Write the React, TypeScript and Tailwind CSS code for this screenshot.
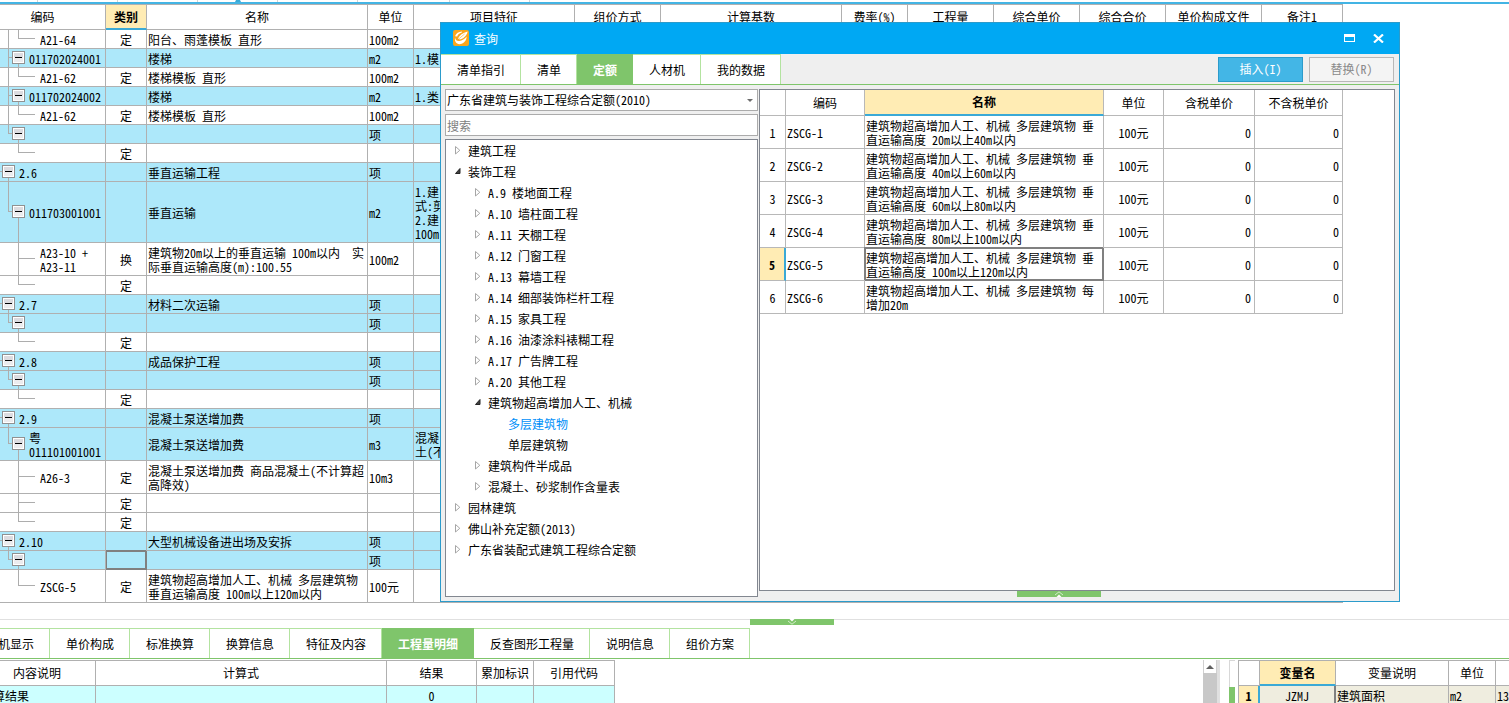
import React from 'react'
import clsx from 'clsx'

type Row = {
  h: 19 | 33 | 61
  level: 0 | 1 | 2
  code?: string
  kind?: string
  name?: string
  unit?: string
  feature?: string
  /** outer branch line: passes through the row or stops at its node */
  outer?: 'through' | 'end'
  /** more siblings follow below on the inner branch */
  more?: boolean
  selected?: boolean
}

const rows: Row[] = [
  { h: 19, level: 2, code: 'A21-64', kind: '定', name: '阳台、雨蓬模板 直形', unit: '100m2', outer: 'through' },
  { h: 19, level: 1, code: '011702024001', name: '楼梯', unit: 'm2', feature: '1.模', outer: 'through' },
  { h: 19, level: 2, code: 'A21-62', kind: '定', name: '楼梯模板 直形', unit: '100m2', outer: 'through' },
  { h: 19, level: 1, code: '011702024002', name: '楼梯', unit: 'm2', feature: '1.类', outer: 'through' },
  { h: 19, level: 2, code: 'A21-62', kind: '定', name: '楼梯模板 直形', unit: '100m2', outer: 'through' },
  { h: 19, level: 1, unit: '项', outer: 'end' },
  { h: 19, level: 2, kind: '定' },
  { h: 19, level: 0, code: '2.6', name: '垂直运输工程', unit: '项' },
  { h: 61, level: 1, code: '011703001001', name: '垂直运输', unit: 'm2', feature: '1.建\n式:剪\n2.建\n100m', outer: 'end' },
  { h: 33, level: 2, code: 'A23-10 +\nA23-11', kind: '换', name: '建筑物20m以上的垂直运输 100m以内  实\n际垂直运输高度(m):100.55', unit: '100m2', more: true },
  { h: 19, level: 2, kind: '定' },
  { h: 19, level: 0, code: '2.7', name: '材料二次运输', unit: '项' },
  { h: 19, level: 1, unit: '项', outer: 'end' },
  { h: 19, level: 2, kind: '定' },
  { h: 19, level: 0, code: '2.8', name: '成品保护工程', unit: '项' },
  { h: 19, level: 1, unit: '项', outer: 'end' },
  { h: 19, level: 2, kind: '定' },
  { h: 19, level: 0, code: '2.9', name: '混凝土泵送增加费', unit: '项' },
  { h: 33, level: 1, code: '粤\n011101001001', name: '混凝土泵送增加费', unit: 'm3', feature: '混凝\n土(不', outer: 'end' },
  { h: 33, level: 2, code: 'A26-3', kind: '定', name: '混凝土泵送增加费 商品混凝土(不计算超\n高降效)', unit: '10m3', more: true },
  { h: 19, level: 2, kind: '定', more: true },
  { h: 19, level: 2, kind: '定' },
  { h: 19, level: 0, code: '2.10', name: '大型机械设备进出场及安拆', unit: '项' },
  { h: 19, level: 1, unit: '项', outer: 'end', selected: true },
  { h: 33, level: 2, code: 'ZSCG-5', kind: '定', name: '建筑物超高增加人工、机械 多层建筑物\n垂直运输高度 100m以上120m以内', unit: '100元' },
]

const rowHeight = { 19: 'h-[19px]', 33: 'h-[33px]', 61: 'h-[61px]' }
const codeIndent = ['pl-[19px]', 'pl-[29px]', 'pl-10']

// the focused cell gets a 2px frame that also covers its neighbours' grid lines
const focusFrame =
  'border-r-2 border-b-2 border-[#808080] shadow-[inset_1px_1px_#808080,-1px_-1px_#808080]'

const mainHeads = ['编码', '类别', '名称', '单位', '项目特征', '组价方式', '计算基数', '费率(%)', '工程量', '综合单价', '综合合价', '单价构成文件', '备注1']
const emptyCols = mainHeads.slice(5)

const BranchLines: React.FC<{ row: Row }> = ({ row }) => {
  const { h, level, outer, more } = row
  const mid = (h - 1) / 2 - 1
  const boxX = level === 0 ? 2 : 12
  return (
    <svg className="absolute top-0 left-0" width="36" height={h} shapeRendering="crispEdges" aria-hidden="true">
      <g fill="#adadad">
        {level === 0 && <rect x="0" y={mid} width="2" height="1" />}
        {level === 0 && <rect x="8" y={mid} width="1" height={h - mid} />}
        {outer && <rect x="8" y="0" width="1" height={outer === 'end' ? mid + 1 : h} />}
        {level === 1 && <rect x="8" y={mid} width="4" height="1" />}
        {level === 1 && <rect x="18" y={mid} width="1" height={h - mid} />}
        {level === 2 && <rect x="18" y="0" width="1" height={more ? h : mid + 1} />}
        {level === 2 && <rect x="18" y={mid} width="17" height="1" />}
      </g>
      {level < 2 && (
        <>
          <rect x={boxX} y={mid - 6} width="13" height="13" fill="#919191" />
          <rect x={boxX + 1} y={mid - 5} width="11" height="11" fill="#fff" />
          <rect x={boxX + 2} y={mid - 4} width="9" height="4" fill="#dcdce0" />
          <rect x={boxX + 2} y={mid} width="9" height="5" fill="#ececee" />
          <rect x={boxX + 3} y={mid} width="7" height="1" fill="#000" />
        </>
      )}
    </svg>
  )
}

const MainGrid = () => (
  <table className="w-[1343px] table-fixed border-separate border-spacing-0 border-t border-[#b0b0b0]">
    <colgroup>
      <col className="w-[106px]" />
      <col className="w-[41px]" />
      <col className="w-[221px]" />
      <col className="w-[46px]" />
      <col className="w-[161px]" />
      <col className="w-[86px]" />
      <col className="w-[181px]" />
      <col className="w-[66px]" />
      <col className="w-[86px]" />
      <col className="w-[86px]" />
      <col className="w-[86px]" />
      <col className="w-[96px]" />
      <col className="w-[81px]" />
    </colgroup>
    <thead>
      <tr className="h-[25px]">
        {mainHeads.map((head) => (
          <th
            key={head}
            className={clsx(
              'border-r border-[#b0b0b0] p-0',
              head === '编码' && 'pr-5',
              head === '类别' ? 'border-b-2 border-b-[#3ba9d6] bg-[#ffecb4] font-bold' : 'border-b font-normal',
            )}
          >
            {head}
          </th>
        ))}
      </tr>
    </thead>
    <tbody>
      {rows.map((row, i) => (
        <tr key={i} className={clsx(rowHeight[row.h], row.level < 2 ? 'bg-[#ade8fa]' : 'bg-white')}>
          <td className={clsx('relative border-r border-b border-[#b0b0b0] pt-0.5 pr-0 pb-0', codeIndent[row.level])}>
            <BranchLines row={row} />
            {row.code}
          </td>
          <td
            className={clsx(
              'p-0 pt-0.5 text-center',
              row.selected ? focusFrame : 'border-r border-b border-[#b0b0b0]',
            )}
          >
            {row.kind}
          </td>
          <td className="border-r border-b border-[#b0b0b0] pt-0.5 pr-0 pb-0 pl-px">{row.name}</td>
          <td className="border-r border-b border-[#b0b0b0] pt-0.5 pr-0 pb-0 pl-px">{row.unit}</td>
          <td className="border-r border-b border-[#b0b0b0] pt-0.5 pr-0 pb-0 pl-px">{row.feature}</td>
          {emptyCols.map((col) => (
            <td key={col} className="border-r border-b border-[#b0b0b0] p-0" />
          ))}
        </tr>
      ))}
    </tbody>
  </table>
)

type Node = { label: string; depth: 0 | 1 | 2; state: 'open' | 'closed' | 'leaf'; active?: boolean }

const tree: Node[] = [
  { label: '建筑工程', depth: 0, state: 'closed' },
  { label: '装饰工程', depth: 0, state: 'open' },
  { label: 'A.9 楼地面工程', depth: 1, state: 'closed' },
  { label: 'A.10 墙柱面工程', depth: 1, state: 'closed' },
  { label: 'A.11 天棚工程', depth: 1, state: 'closed' },
  { label: 'A.12 门窗工程', depth: 1, state: 'closed' },
  { label: 'A.13 幕墙工程', depth: 1, state: 'closed' },
  { label: 'A.14 细部装饰栏杆工程', depth: 1, state: 'closed' },
  { label: 'A.15 家具工程', depth: 1, state: 'closed' },
  { label: 'A.16 油漆涂料裱糊工程', depth: 1, state: 'closed' },
  { label: 'A.17 广告牌工程', depth: 1, state: 'closed' },
  { label: 'A.20 其他工程', depth: 1, state: 'closed' },
  { label: '建筑物超高增加人工、机械', depth: 1, state: 'open' },
  { label: '多层建筑物', depth: 2, state: 'leaf', active: true },
  { label: '单层建筑物', depth: 2, state: 'leaf' },
  { label: '建筑构件半成品', depth: 1, state: 'closed' },
  { label: '混凝土、砂浆制作含量表', depth: 1, state: 'closed' },
  { label: '园林建筑', depth: 0, state: 'closed' },
  { label: '佛山补充定额(2013)', depth: 0, state: 'closed' },
  { label: '广东省装配式建筑工程综合定额', depth: 0, state: 'closed' },
]

const nodeIndent = ['pl-[9px]', 'pl-[29px]', 'pl-[49px]']

const CategoryTree = () => (
  <ul className="flex-1 border border-[#828790] bg-white">
    {tree.map((node) => (
      <li key={node.label} className={clsx('flex h-[21px] items-center gap-1.5', nodeIndent[node.depth])}>
        <svg className="shrink-0" width="7" height="9" viewBox="0 0 7 9" aria-hidden="true">
          {node.state === 'closed' && <path d="M0.5 0.5V8L4.8 4.3Z" fill="#fff" stroke="#a6a6a6" />}
          {node.state === 'open' && <path d="M5 1.5V6.5H0.5Z" fill="#404040" stroke="#262626" />}
        </svg>
        <span className={node.active ? 'text-[#0090f8]' : undefined}>{node.label}</span>
      </li>
    ))}
  </ul>
)

const quotaRows = [
  ['ZSCG-1', '建筑物超高增加人工、机械 多层建筑物 垂\n直运输高度 20m以上40m以内'],
  ['ZSCG-2', '建筑物超高增加人工、机械 多层建筑物 垂\n直运输高度 40m以上60m以内'],
  ['ZSCG-3', '建筑物超高增加人工、机械 多层建筑物 垂\n直运输高度 60m以上80m以内'],
  ['ZSCG-4', '建筑物超高增加人工、机械 多层建筑物 垂\n直运输高度 80m以上100m以内'],
  ['ZSCG-5', '建筑物超高增加人工、机械 多层建筑物 垂\n直运输高度 100m以上120m以内'],
  ['ZSCG-6', '建筑物超高增加人工、机械 多层建筑物 每\n增加20m'],
]

const QuotaTable = () => (
  <table className="w-[583px] table-fixed border-separate border-spacing-0">
    <colgroup>
      <col className="w-[26px]" />
      <col className="w-[79px]" />
      <col className="w-[239px]" />
      <col className="w-[60px]" />
      <col className="w-[91px]" />
      <col className="w-[88px]" />
    </colgroup>
    <thead>
      <tr className="h-[26px]">
        {['', '编码', '名称', '单位', '含税单价', '不含税单价'].map((head) => (
          <th
            key={head}
            className={clsx(
              'border-r border-[#b8b8b8] p-0',
              head === '名称' ? 'border-b-2 border-b-[#3ba9d6] bg-[#ffecb4] font-bold' : 'border-b font-normal',
            )}
          >
            {head}
          </th>
        ))}
      </tr>
    </thead>
    <tbody>
      {quotaRows.map(([code, name], i) => {
        const current = code === 'ZSCG-5'
        return (
          <tr key={code} className="h-[33px]">
            <td
              className={clsx(
                'border-b border-[#b8b8b8] p-0 pt-0.5 text-center',
                current ? 'border-r-2 border-r-[#3ba9d6] bg-[#ffecb4] font-bold' : 'border-r',
              )}
            >
              {i + 1}
            </td>
            <td className="border-r border-b border-[#b8b8b8] pt-0.5 pr-0 pb-0 pl-px">{code}</td>
            <td className={clsx('p-0 pt-0.5 pl-px', current ? focusFrame : 'border-r border-b border-[#b8b8b8]')}>
              {name}
            </td>
            <td className="border-r border-b border-[#b8b8b8] p-0 pt-0.5 text-center">100元</td>
            <td className="border-r border-b border-[#b8b8b8] pt-0.5 pr-[3px] pb-0 pl-0 text-right">0</td>
            <td className="border-r border-b border-[#b8b8b8] pt-0.5 pr-[3px] pb-0 pl-0 text-right">0</td>
          </tr>
        )
      })}
    </tbody>
  </table>
)

const dialogTabs = ['清单指引', '清单', '定额', '人材机', '我的数据']

const QueryDialog = () => (
  <section
    aria-label="查询"
    className="absolute top-[22px] left-[440px] flex h-[580px] w-[960px] flex-col border border-[#2b9bcb] bg-[#efefef]"
  >
    <header className="flex h-[31px] items-center bg-[#00a8f3] pr-[15px] pb-px pl-3 text-white">
      <svg width="16" height="16" viewBox="0 0 16 16" aria-hidden="true">
        <rect width="16" height="16" rx="2" fill="#f9a61c" />
        <path d="M2 6.2C3.2 3.4 5.6 1.8 9 1.6L8.6 2.8C6.4 3.4 4.8 4.6 4.2 6.4Z" fill="#fff" />
        <path d="M5 8.4C6.6 5.4 9.6 2.6 14.6 1.4C14.2 4.6 11.4 8 6.8 9.6Z" fill="#fff" />
        <path d="M2 7.6C2.4 10.4 4 11.2 6.4 11C9 10.8 11.8 9 13.6 6.6C13.6 10.6 10.6 14.2 6.4 14.2C3.2 14.2 1.4 11.4 2 7.6Z" fill="#fff" />
        <path d="M5.4 9.2L11.6 4" stroke="#f9a61c" strokeWidth="0.6" />
      </svg>
      <h2 className="ml-[5px] flex-1 pt-px">查询</h2>
      <button type="button" aria-label="最大化" className="mr-[18px]">
        <svg width="11" height="8" viewBox="0 0 11 8" shapeRendering="crispEdges">
          <path d="M0 0H11V8H0ZM1 3V7H10V3Z" fill="#fff" fillRule="evenodd" />
        </svg>
      </button>
      <button type="button" aria-label="关闭">
        <svg width="11" height="9" viewBox="0 0 11 9">
          <path d="M1 0.5L10 8.5M10 0.5L1 8.5" stroke="#fff" strokeWidth="2.2" />
        </svg>
      </button>
    </header>

    <div className="flex h-[31px] items-stretch border-b border-[#7fc56b]">
      {dialogTabs.map((tab) => (
        <button
          key={tab}
          type="button"
          className={clsx(
            'border-t border-r pr-[15px] pl-4',
            tab === '定额' ? 'border-[#7fc56b] bg-[#7fc56b] font-bold text-white' : 'border-[#b3e3a0] bg-white',
          )}
        >
          {tab}
        </button>
      ))}
      <div className="flex flex-1 items-center justify-end gap-1.5 pr-[5px]">
        <button type="button" className="h-[25px] w-[85px] border border-[#2b9bcb] bg-[#43b6e6] text-white">
          插入(I)
        </button>
        <button type="button" disabled className="h-[25px] w-[85px] border border-[#b8b8b8] bg-[#f4f4f4] text-[#8a8a8a]">
          替换(R)
        </button>
      </div>
    </div>

    <div className="flex min-h-0 flex-1 gap-px p-1">
      <div className="flex w-[313px] flex-col gap-[3px]">
        <div className="relative flex">
          <select
            aria-label="定额库"
            className="h-[22px] w-full appearance-none border border-[#ababab] bg-white pl-px"
          >
            <option>广东省建筑与装饰工程综合定额(2010)</option>
          </select>
          <svg className="pointer-events-none absolute top-2.5 right-[5px]" width="6" height="3" viewBox="0 0 6 3" aria-hidden="true">
            <path d="M0 0H6L3 3Z" fill="#6d6d6d" />
          </svg>
        </div>
        <input
          type="search"
          aria-label="搜索"
          placeholder="搜索"
          className="h-[22px] border border-[#ababab] bg-white pl-px placeholder-[#808080]"
        />
        <CategoryTree />
      </div>
      <div className="flex flex-1 flex-col">
        <div className="flex-1 border border-[#828790] bg-white">
          <QuotaTable />
        </div>
        <button type="button" aria-label="展开" className="ml-[258px] flex h-1.5 w-[84px] justify-center bg-[#7fc56b]">
          <svg width="10" height="6" viewBox="0 0 10 6">
            <path d="M1 4L5 0.8L9 4" stroke="#d3ecca" fill="none" />
            <path d="M2.5 6L5 3.5L7.5 6Z" fill="#fff" />
          </svg>
        </button>
      </div>
    </div>
  </section>
)

const detailTabs = ['机显示', '单价构成', '标准换算', '换算信息', '特征及内容', '工程量明细', '反查图形工程量', '说明信息', '组价方案']

const DetailTabs = () => (
  <nav className="flex h-[31px] items-stretch border-b border-[#7fc56b]">
    {detailTabs.map((tab, i) => (
      <button
        key={tab}
        type="button"
        className={clsx(
          'border-t border-r pr-[15px] whitespace-nowrap',
          i === 0 ? 'flex w-[50px] items-center justify-end overflow-hidden' : 'pl-4',
          tab === '工程量明细' ? 'border-[#7fc56b] bg-[#7fc56b] font-bold text-white' : 'border-[#b3e3a0] bg-white',
        )}
      >
        {tab}
      </button>
    ))}
  </nav>
)

const ResultTable = () => (
  <table className="-ml-[21px] w-[636px] table-fixed border-separate border-spacing-0 border-t border-[#b0b0b0]">
    <colgroup>
      <col className="w-[117px]" />
      <col className="w-[291px]" />
      <col className="w-[90px]" />
      <col className="w-[57px]" />
      <col className="w-[81px]" />
    </colgroup>
    <thead>
      <tr className="h-[25px]">
        {['内容说明', '计算式', '结果', '累加标识', '引用代码'].map((head) => (
          <th key={head} className="border-r border-b border-[#b0b0b0] p-0 font-normal">
            {head}
          </th>
        ))}
      </tr>
    </thead>
    <tbody>
      <tr className="h-5 bg-[#ccffff]">
        <td className="border-r border-b border-[#b0b0b0] py-0 pr-0 pl-3.5">算结果</td>
        <td className="border-r border-b border-[#b0b0b0] p-0" />
        <td className="border-r border-b border-[#b0b0b0] p-0 text-center">0</td>
        <td className="border-r border-b border-[#b0b0b0] p-0" />
        <td className="border-r border-b border-[#b0b0b0] p-0" />
      </tr>
    </tbody>
  </table>
)

const VariableTable = () => (
  <table className="w-full table-fixed border-separate border-spacing-0 border-t border-l border-[#b0b0b0]">
    <colgroup>
      <col className="w-[21px]" />
      <col className="w-[76px]" />
      <col className="w-[113px]" />
      <col className="w-[47px]" />
      <col />
    </colgroup>
    <thead>
      <tr className="h-[25px]">
        {['', '变量名', '变量说明', '单位'].map((head) => (
          <th
            key={head}
            className={clsx(
              'border-r border-[#b0b0b0] p-0',
              head === '变量名' ? 'border-b-2 border-b-[#3ba9d6] bg-[#ffecb4] font-bold' : 'border-b font-normal',
            )}
          >
            {head}
          </th>
        ))}
        <th className="border-b border-[#b0b0b0] p-0" />
      </tr>
    </thead>
    <tbody>
      <tr className="h-5 bg-[#efeddf]">
        <td className="border-r-2 border-b border-[#b0b0b0] border-r-[#3ba9d6] bg-[#ffecb4] p-0 text-center font-bold">1</td>
        <td className="border-r-2 border-b border-[#b0b0b0] border-r-[#808080] p-0 text-center">JZMJ</td>
        <td className="border-r border-b border-[#b0b0b0] py-0 pr-0 pl-px">建筑面积</td>
        <td className="border-r border-b border-[#b0b0b0] py-0 pr-0 pl-px">m2</td>
        <td className="border-b border-[#b0b0b0] py-0 pr-0 pl-px">13</td>
      </tr>
    </tbody>
  </table>
)

export default function App() {
  return (
    <div className="relative flex h-screen flex-col overflow-hidden bg-white font-['Noto_Sans_Mono_CJK_SC','Noto_Sans_CJK_SC',sans-serif] text-[12px] leading-[14px] whitespace-pre text-black">
      <div className="flex h-1 shrink-0 border-b-2 border-[#43b4e4]">
        <div className="w-[38px] border-r border-[#d4d4d4]" />
        <div className="w-20 border-r border-[#d4d4d4]" />
        <div className="w-20 border-r border-[#d4d4d4]" />
        <div className="flex w-20 justify-center border-r border-[#d4d4d4]">
          <svg width="6" height="2" viewBox="0 0 6 2" aria-hidden="true">
            <path d="M1 0H5L6 2H0Z" fill="#3ba9d6" />
          </svg>
        </div>
        <div className="w-20 border-r border-[#d4d4d4]" />
        <div className="w-[92px] border-r border-[#d4d4d4]" />
        <div className="w-20 border-r border-[#d4d4d4]" />
      </div>

      <main className="shrink-0 pb-4">
        <MainGrid />
      </main>

      <div className="flex h-[9px] shrink-0 justify-center border-t border-[#e0e0e0]">
        <button type="button" aria-label="收起" className="-mt-px ml-[75px] flex h-1.5 w-[84px] justify-center bg-[#7fc56b]">
          <svg width="10" height="6" viewBox="0 0 10 6">
            <path d="M2.5 0L5 2.5L7.5 0Z" fill="#fff" />
            <path d="M1 2L5 5.2L9 2" stroke="#d3ecca" fill="none" />
          </svg>
        </button>
      </div>
      <DetailTabs />

      <div className="flex min-h-0 flex-1 pt-px">
        <div className="flex min-w-0 flex-1 items-start overflow-hidden">
          <ResultTable />
        </div>
        <div className="flex w-[17px] border-r-3 border-[#e0e0e0] bg-[#c8c8c8]">
          <div className="flex h-[13px] w-full items-center justify-center border-x border-[#d0d0d0] bg-white">
            <svg width="8" height="4" viewBox="0 0 8 4" aria-hidden="true">
              <path d="M4 0L8 4H0Z" fill="#606060" />
            </svg>
          </div>
        </div>
        <div className="flex w-[18px] flex-col pr-[3px] pl-[9px]">
          <div className="h-[27px] shrink-0 border-t border-l border-[#d8d8d8]" />
          <div className="flex-1 bg-[#7fc56b]" />
        </div>
        <div className="w-[271px]">
          <VariableTable />
        </div>
      </div>

      <QueryDialog />
    </div>
  )
}
